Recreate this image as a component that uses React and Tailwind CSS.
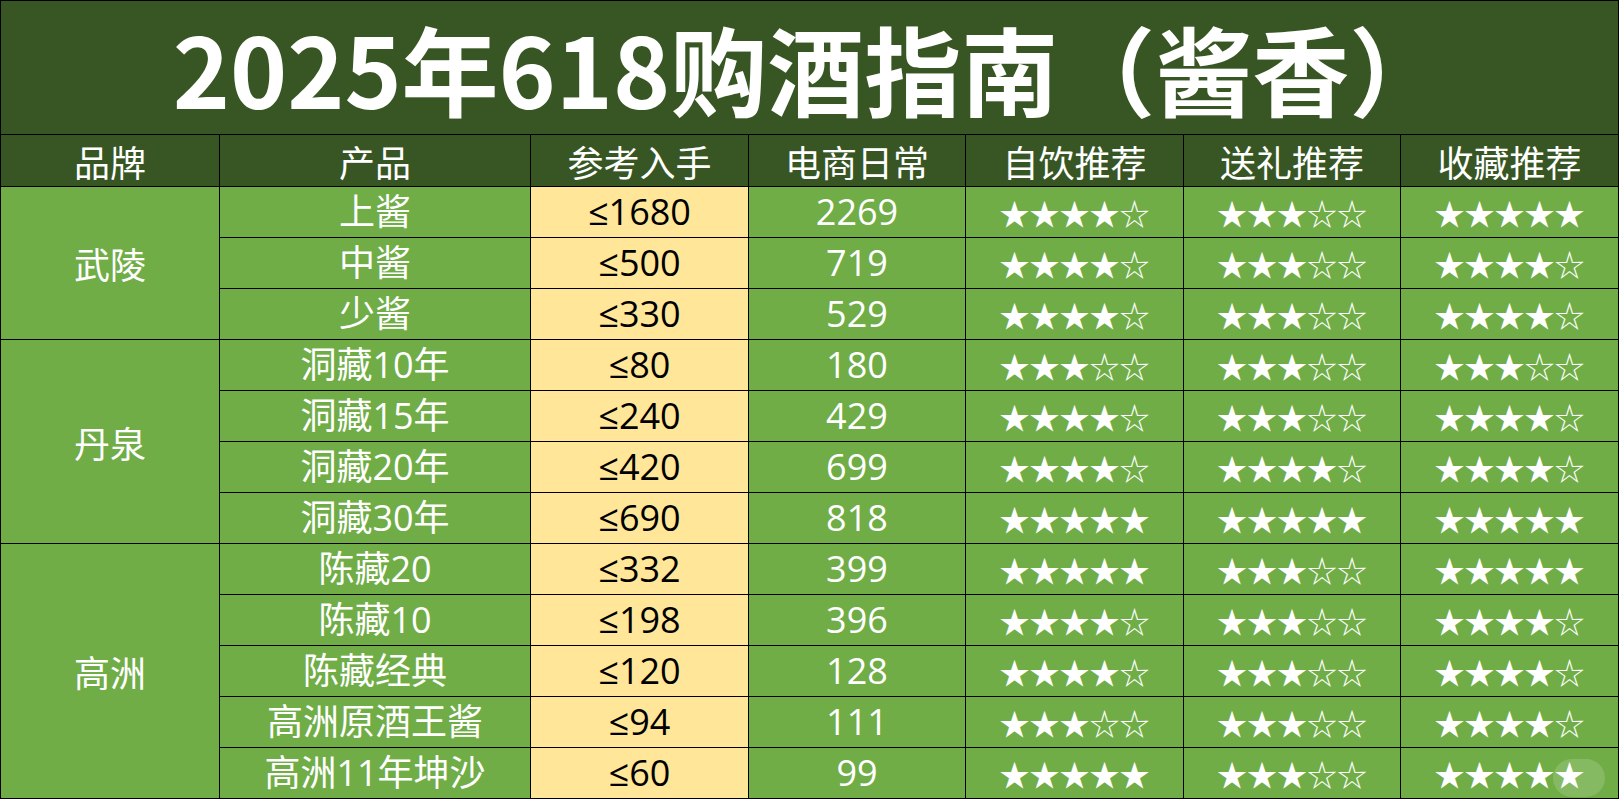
import React from "react";

const groups = [
  {
    brand: "武陵",
    items: [
      ["上酱", "≤1680", "2269", 4, 3, 5],
      ["中酱", "≤500", "719", 4, 3, 4],
      ["少酱", "≤330", "529", 4, 3, 4],
    ],
  },
  {
    brand: "丹泉",
    items: [
      ["洞藏10年", "≤80", "180", 3, 3, 3],
      ["洞藏15年", "≤240", "429", 4, 3, 4],
      ["洞藏20年", "≤420", "699", 4, 4, 4],
      ["洞藏30年", "≤690", "818", 5, 5, 5],
    ],
  },
  {
    brand: "高洲",
    items: [
      ["陈藏20", "≤332", "399", 5, 3, 5],
      ["陈藏10", "≤198", "396", 4, 3, 4],
      ["陈藏经典", "≤120", "128", 4, 3, 4],
      ["高洲原酒王酱", "≤94", "111", 3, 3, 4],
      ["高洲11年坤沙", "≤60", "99", 5, 3, 5],
    ],
  },
];

const headers = ["品牌", "产品", "参考入手", "电商日常", "自饮推荐", "送礼推荐", "收藏推荐"];

const rowSpans = {
  3: "row-span-3",
  4: "row-span-4",
  5: "row-span-5",
};

const stars = (n) => "★".repeat(n) + "☆".repeat(5 - n);

const Cell = ({ children, className = "" }) => (
  <div className={`flex items-center justify-center bg-[#70ad47] text-white ${className}`}>
    {children}
  </div>
);

const Stars = ({ n }) => (
  <Cell className="font-['Noto_Sans_CJK_SC',sans-serif] text-[30px] leading-none">
    {stars(n)}
  </Cell>
);

export default function App() {
  return (
    <div className="w-[1619px] h-[799px] overflow-hidden bg-black p-px flex flex-col gap-px font-['Open_Sans','Noto_Sans_CJK_SC',sans-serif] relative">
      <div className="h-[133px] shrink-0 bg-[#375623] flex items-center justify-center">
        <h1 className="text-white text-[97px] font-bold leading-[1.2] font-['Noto_Sans_CJK_SC',sans-serif]">
          2025年618购酒指南（酱香）
        </h1>
      </div>
      <div className="grid grid-cols-[218px_310px_217px_216px_217px_216px_217px] grid-rows-[51px_repeat(12,50px)] gap-px text-[36px] leading-none">
        {headers.map((h) => (
          <div key={h} className="bg-[#375623] text-white flex items-center justify-center font-['Noto_Sans_CJK_SC',sans-serif]">
            {h}
          </div>
        ))}
        {groups.map((g) => (
          <React.Fragment key={g.brand}>
            <Cell className={`${rowSpans[g.items.length]} font-['Noto_Sans_CJK_SC',sans-serif]`}>
              {g.brand}
            </Cell>
            {g.items.map((it, i) => (
              <React.Fragment key={it[0]}>
                <Cell className={i === 0 ? "" : "col-start-2"}>{it[0]}</Cell>
                <div className="bg-[#ffe699] text-black flex items-center justify-center">{it[1]}</div>
                <Cell>{it[2]}</Cell>
                <Stars n={it[3]} />
                <Stars n={it[4]} />
                <Stars n={it[5]} />
              </React.Fragment>
            ))}
          </React.Fragment>
        ))}
      </div>
      <div className="absolute right-[14px] bottom-[2px] w-[52px] h-[38px] rounded-full bg-white/15"></div>
    </div>
  );
}
